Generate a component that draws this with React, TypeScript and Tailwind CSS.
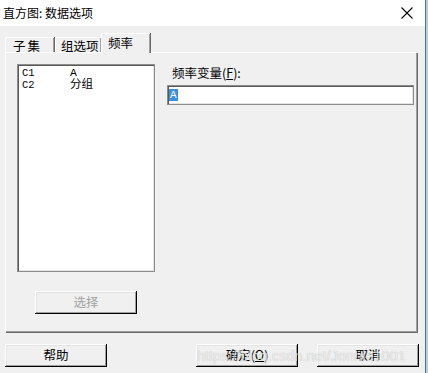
import { useState } from 'react';

// Classic Win32-style dialog: 直方图: 数据选项, on the 频率 tab
const VARIABLES = [
  { col: 'C1', name: 'A' },
  { col: 'C2', name: '分组' },
];

const TABS = ['子集', '组选项', '频率'];

const FONT_UI = "font-['Microsoft_YaHei','Noto_Sans_CJK_SC',sans-serif]";

function WinButton({ label, disabled, className }: { label: React.ReactNode; disabled?: boolean; className?: string }) {
  return (
    <button
      type="button"
      className={`flex h-[23px] w-[102px] items-center justify-center bg-[#f0f0f0] text-[12.5px] shadow-[inset_-1px_-1px_0_#000,inset_1px_1px_0_#fff,inset_-2px_-2px_0_#a0a0a0,inset_2px_2px_0_#e3e3e3] ${
        disabled ? 'text-[#a0a0a0]' : 'text-black'
      } ${className ?? ''}`}
    >
      {label}
    </button>
  );
}

export default function App() {
  const [activeTab, setActiveTab] = useState(2);

  return (
    <div className={`relative flex h-[373px] w-[428px] overflow-hidden bg-[#c9c9c9] ${FONT_UI}`}>
      <div className="flex w-[425px] flex-col bg-[#f0f0f0]">
        {/* Title bar */}
        <div className="flex h-[26px] items-center justify-between bg-white pl-[3px] pr-[12px]">
          <span className="text-[12px] leading-none text-black">直方图: 数据选项</span>
          <svg width="12" height="12" viewBox="0 0 12 12" className="text-black">
            <path d="M0.5 0.5 L11.5 11.5 M11.5 0.5 L0.5 11.5" stroke="currentColor" strokeWidth="1.1" />
          </svg>
        </div>

        <div className="flex flex-col px-[5px] pt-[7px]">
          {/* Tabs */}
          <div className="flex h-[19px] items-end">
            {TABS.map((tab, i) => {
              const active = i === activeTab;
              return (
                <div
                  key={tab}
                  onClick={() => setActiveTab(i)}
                  className={`relative flex cursor-default items-start border-l border-t border-white text-[12.5px] leading-none text-black shadow-[inset_-1px_0_0_#a0a0a0,1px_0_0_#696969] ${
                    active
                      ? 'z-10 -mb-px h-[20px] w-[49px] bg-[#f0f0f0] pl-[6px] pt-[3px]'
                      : i === 0
                        ? 'h-[15px] w-[49px] pl-[7px] pt-[2px] tracking-[2px]'
                        : 'ml-px h-[15px] w-[46px] pl-[5px] pt-[2px]'
                  }`}
                >
                  {tab}
                </div>
              );
            })}
          </div>

          {/* Tab panel */}
          <div className="flex h-[280px] w-[412px] border-l border-t border-white shadow-[inset_-1px_-1px_0_#a0a0a0,1px_1px_0_#696969] pl-[11px] pt-[11px]">
            <div className="flex flex-col">
              <div className="h-[208px] w-[138px] border border-[#8c8c8c] bg-white pl-[4px] pt-[2px] shadow-[inset_1px_1px_0_#5a5a5a,inset_-1px_-1px_0_#e3e3e3]">
                {VARIABLES.map((v) => (
                  <div key={v.col} className="flex h-[12px] items-center text-[10.5px] leading-none text-black">
                    <span className="w-[48px] font-['Liberation_Mono',monospace]">{v.col}</span>
                    <span className="font-['Liberation_Mono','Noto_Sans_CJK_SC',monospace] text-[11.5px]">{v.name}</span>
                  </div>
                ))}
              </div>
              <WinButton label="选择" disabled className="ml-[18px] mt-[19px]" />
            </div>

            <div className="ml-[12px] flex flex-col">
              <label className="ml-[5px] mt-[3px] text-[12.5px] leading-none text-black">
                频率变量(<span className="underline">F</span>):
              </label>
              <div className="mt-[5px] flex h-[20px] w-[247px] items-center border border-[#8c8c8c] bg-white pl-[1px] shadow-[inset_1px_1px_0_#5a5a5a,inset_-1px_-1px_0_#e3e3e3]">
                <span className="bg-[#3c8fdd] px-[1px] font-['Liberation_Mono',monospace] text-[11px] leading-[12px] text-white">A</span>
              </div>
            </div>
          </div>

          {/* Bottom buttons */}
          <div className="mt-[12px] flex">
            <WinButton label="帮助" />
            <WinButton label={<span>确定(<span className="underline">O</span>)</span>} className="ml-[89px]" />
            <WinButton label="取消" className="ml-[19px] w-[101px]" />
          </div>
        </div>
      </div>
      <div className="w-px bg-[#2b79c9]" />

      {/* watermark overlay */}
      <span className="pointer-events-none absolute left-[197px] top-[346px] font-['Liberation_Sans',sans-serif] text-[14.5px] text-white/75 [text-shadow:0_0_1px_rgba(0,0,0,0.3)]">
        https://blog.csdn.net/Jonnie1001
      </span>
    </div>
  );
}
